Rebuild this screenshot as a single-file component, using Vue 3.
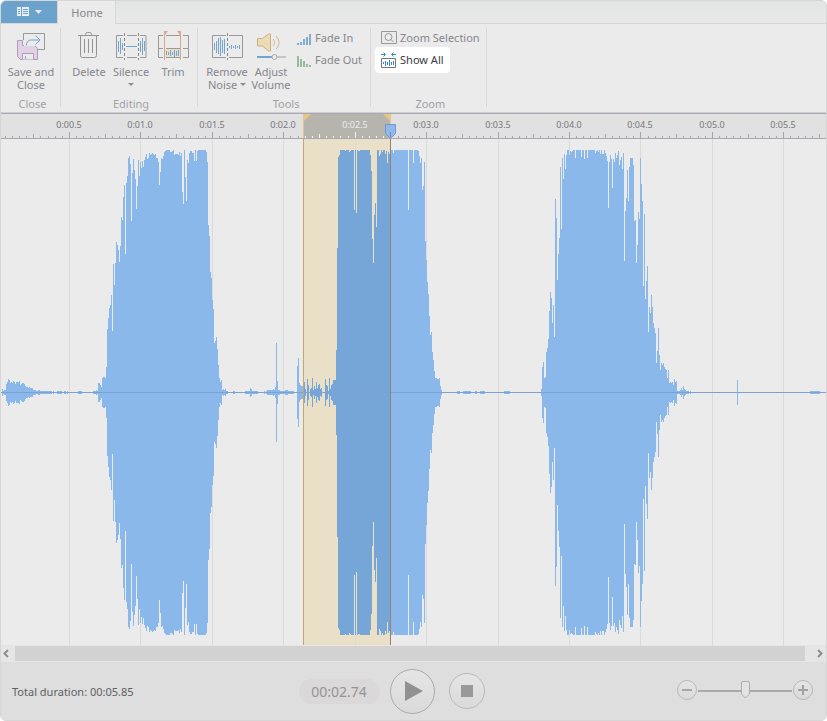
<script setup>
import { ref } from 'vue'

const SPAN = 825
const zoom = ref(50)

// Envelope steps: column position, amplitude (held until the next step)
const steps = `2:3 3:1 4:2 6:8 7:10 8:13 9:12 10:9 11:10 12:9 13:11 14:10 15:8 16:10 19:11 20:7 21:8 22:9 24:8 25:6 26:5 28:4 29:5 30:4 33:2 36:1 38:2 40:1 52:0 53:1 54:0 57:1 62:0 64:1 66:0 67:1 68:0 78:1 82:0
93:1 96:2 97:1 98:9 100:7 101:5 102:14 103:15 105:14 106:25 107:63 108:74 109:84 110:87 111:97 112:61 113:128 114:107 115:129 116:150 117:147 118:142 119:130 120:146 121:175 122:172 123:195 124:207 125:138 126:209 127:216 128:234 129:236 130:228 131:171 132:219 133:233 134:222 135:213 136:183 137:206 138:232 139:216 140:230 141:224 142:231 143:225 144:232 145:235 146:238 147:233 148:234 149:239 150:237 151:238 152:239 153:238 154:237 155:238 156:234 158:230 159:207 160:220 161:234 162:233 163:236 164:240 165:241 166:242 170:240 172:241 173:242 174:237 175:238 178:237 179:240 180:236 181:239 182:200 183:188 184:242 185:215 186:191 187:232 188:229 189:239 190:241 192:239 194:231 195:242 196:231 197:241 198:242 206:240 207:230 208:167 209:156 210:120 211:114 212:92 213:83 214:49 215:51 216:55 217:43 218:27 219:14 220:10 221:12 222:2 223:3 224:2 225:3 226:1 228:0
233:1 235:0 245:1 250:4 251:3 252:1 258:0 264:1 265:0 266:1 267:2 273:3 274:2 275:5 276:49 277:11 278:2 280:1 285:2 288:1 294:0 297:26 298:34 299:9 300:7 301:6 304:10 305:3 306:0 307:13 308:7 309:0 310:3 311:4 312:14 313:2 314:6 315:3 316:10 317:4 318:7 319:8 320:3 321:4 322:0 325:13 326:7 327:6 328:1 329:14 330:3 331:7 332:8 333:12 336:42 337:144 338:235 339:237 340:242 345:241 346:242 349:240 350:241 351:242 354:182 355:242 356:179 357:242 358:241 360:242 370:237 371:221 372:153 373:129 374:177 375:189 376:165 377:242 379:236 380:238 381:242 382:240 383:242 385:238 386:241 387:229 388:240 389:238 390:242 393:239 394:242 408:182 409:242 413:229 414:242 418:241 419:236 420:229 421:234 422:202 423:206 424:230 425:151 426:132 427:110 428:98 429:76 430:57 431:60 432:40 433:32 434:21 435:14 437:13 439:14 440:6 441:2 442:0
457:1 460:0 463:1 471:0 475:1 477:0 480:1 485:0 504:1 510:0
541:3 542:25 543:30 544:14 545:15 546:40 547:44 548:53 549:81 550:100 551:94 552:69 553:87 554:55 555:193 556:174 557:112 558:138 559:154 560:225 561:163 562:234 563:213 564:238 565:223 566:237 567:242 569:237 570:241 571:240 572:241 573:242 575:234 576:242 581:235 582:242 584:233 585:242 587:234 588:242 595:239 596:241 597:242 598:240 599:242 600:238 601:242 602:238 604:242 605:239 606:236 607:231 608:184 609:230 610:237 611:233 612:204 613:233 614:230 615:239 616:234 617:237 618:241 619:227 620:232 621:235 622:223 623:239 624:131 625:181 626:194 627:222 628:191 629:225 630:234 633:227 634:171 635:172 636:129 637:147 638:180 639:173 640:234 641:208 642:191 643:106 644:178 645:93 646:111 647:126 648:60 649:85 650:79 651:97 652:85 653:69 654:64 655:59 656:29 657:41 658:64 659:37 660:22 661:29 662:27 663:29 664:25 665:23 666:22 667:14 668:22 669:9 670:10 671:9 672:10 673:7 674:13 675:10 676:11 677:1 680:2 681:4 682:2 683:6 684:3 685:2 686:1 689:0 690:1 691:0
737:12 738:0 810:1 820:0 826:0`
  .split(/\s+/)
  .map((s) => s.split(':').map(Number))

let wavePath = ''
for (let i = 0; i < steps.length - 1; i++) {
  const [x, a] = steps[i]
  if (!a) continue
  const w = steps[i + 1][0] - x
  wavePath += `M${x - 1} ${253 - a}h${w}v${2 * a + 1}h${-w}z`
}

const at = (sec) => Math.floor(sec * 142.86 - 2 + 0.05) - 1
const pct = (x) => (x / SPAN) * 100 + '%'

const ticks = []
for (let n = 1; n <= 115; n++) {
  const x = at(n * 0.05)
  if (x < 0 || x >= SPAN) continue
  ticks.push({ x, h: n % 10 === 0 ? 6 : n % 5 === 0 ? 4 : 2, lit: x > 302 && x < 388 })
}
const marks = []
for (let n = 1; n <= 11; n++) {
  const x = at(n * 0.5)
  marks.push({ x, text: `0:0${(n / 2).toFixed(1)}`, lit: n === 5 })
}
</script>

<template>
  <div class="window">
    <nav class="tabs">
      <button class="file" aria-label="File menu">
        <svg width="32" height="12" viewBox="0 0 32 12">
          <path fill="#e8eef2" fill-rule="evenodd" d="M0 1h4v9H0zM1 3v1h2V3zM1 5v1h2V5zM1 7v1h2V7zM5 1h7v9H5zM6 3v1h5V3zM6 5v1h5V5zM6 7v1h5V7z" />
          <path fill="#e8eef2" d="M18 4h7l-3.500 4z" />
        </svg>
      </button>
      <button class="tab">Home</button>
    </nav>

    <section class="ribbon">
      <div class="group">
        <div class="tools closing">
          <button class="big wide">
            <svg width="32" height="30" viewBox="0 0 32 30" fill="none">
              <path stroke="#999" d="M8.500 9V2.500h21v16H23" />
              <path fill="#dfd3e3" stroke="#b398c1" d="M2.500 9.500h5v5h11v-1l4 4v11h-17l-3-3z" />
              <path fill="#ebebeb" stroke="#b398c1" d="M7.500 28.500v-6h11v6M10.500 28v-3" />
              <path fill="#ebebeb" d="M9 9h12v6H9z" />
              <path stroke="#72a5d2" d="M11.500 14.500c0-4 2-5.500 5-5.500h8M20.500 4.500L25 9l-4.500 4.500" />
            </svg>
            <span>Save and<br />Close</span>
          </button>
        </div>
        <div class="caption">Close</div>
      </div>

      <div class="group">
        <div class="tools editing">
          <button class="big">
            <svg width="32" height="30" viewBox="0 0 32 30" fill="none" stroke="#939393">
              <path d="M5 4.500h21M12.500 4V3.500a2 2 0 0 1 2-2h2a2 2 0 0 1 2 2V4M7.500 5v19.500a2 2 0 0 0 2 2h12a2 2 0 0 0 2-2V5M11.500 8v14M15.500 8v14M19.500 8v14" />
            </svg>
            <span>Delete</span>
          </button>
          <button class="big">
            <svg width="32" height="30" viewBox="0 0 32 30" fill="none">
              <path stroke="#999" d="M8 4.500H1.500v22H8M12 4.500h10M12 26.500h10M25 4.500h6v22H25" />
              <path stroke="#888" stroke-dasharray="3 2" d="M9.500 2v27M23.500 2v27" />
              <path stroke="#72a5d2" d="M3.500 10v11M5.500 7v16M7.500 12v7M11 15.500h11M25.500 10v11M27.500 7v17M29.500 10v10" />
            </svg>
            <span>Silence</span>
            <i class="arrow"></i>
          </button>
          <button class="big">
            <svg width="32" height="30" viewBox="0 0 32 30" fill="none">
              <path fill="#e9e0cc" d="M8 18h15v8H8z" />
              <path stroke="#999" d="M6 4.500H1.500v22H6M9 4.500h14M9 26.500h14M26 4.500h5.500v22H26M1 17.500h5M9 17.500h14M26 17.500h5" />
              <path stroke="#dda68a" d="M7.500 2v27M23.500 2v27" />
              <path fill="#dda68a" d="M7 0h4L8 4H7zM24 0h-4l3 4h1z" />
              <path stroke="#72a5d2" d="M9.500 20v4M11.500 21v3M13.500 19v6M15.500 21v3M17.500 19v7M19.500 20v5M21.500 19v6" />
            </svg>
            <span>Trim</span>
          </button>
        </div>
        <div class="caption">Editing</div>
      </div>

      <div class="group">
        <div class="tools sound">
          <button class="big">
            <svg width="32" height="30" viewBox="0 0 32 30" fill="none">
              <path stroke="#999" d="M15 4.500H1.500v22H15M18 4.500h13.500v22H18" />
              <path stroke="#888" stroke-dasharray="3 2" d="M16.500 2v27" />
              <path stroke="#72a5d2" d="M3.500 12v7M5.500 10v12M7.500 7v16M9.500 6v19M11.500 9v13M13.500 8v15M18.500 15v2M20.500 14v4M22.500 15v2M24.500 14v4M26.500 15v2M28.500 14v4" />
            </svg>
            <span>Remove<br />Noise <i class="arrow inline"></i></span>
          </button>
          <button class="big">
            <svg width="32" height="30" viewBox="0 0 32 30" fill="none">
              <path fill="#ecdcb4" stroke="#cfae81" d="M2.500 7.500h5l6-4.500h2v17h-2l-6-5h-5z" />
              <path stroke="#d5b48c" d="M18 8c2 2 2 5 0 7M21 5c4 4 4 9 0 13" />
              <path stroke="#72a5d2" stroke-width="2" d="M2 26h15" />
              <path stroke="#c5c5c5" stroke-width="2" d="M22 26h9" />
              <circle cx="19.500" cy="26" r="2.500" stroke="#aaa" fill="#ebebeb" />
            </svg>
            <span>Adjust<br />Volume</span>
          </button>
          <div class="stack">
            <button class="small">
              <svg width="14" height="16" viewBox="0 0 14 16" fill="#82abd2">
                <path d="M0 13h2v2H0zM3 12h2v3H3zM6 9h2v6H6zM9 7h2v8H9zM12 4h2v11h-2z" />
              </svg>
              Fade In
            </button>
            <button class="small">
              <svg width="14" height="16" viewBox="0 0 14 16" fill="#94bb9b">
                <path d="M0 4h2v11H0zM3 7h2v8H3zM6 9h2v6H6zM9 12h2v3H9zM12 13h2v2h-2z" />
              </svg>
              Fade Out
            </button>
          </div>
        </div>
        <div class="caption">Tools</div>
      </div>

      <div class="group">
        <div class="tools view">
          <div class="stack">
            <button class="small">
              <svg width="16" height="16" viewBox="0 0 16 16" fill="none" stroke="#999">
                <path d="M.5 1.500h15v12H.5z" />
                <circle cx="7.500" cy="7" r="3.500" />
                <path d="M10 9.500l2.500 2.500" />
              </svg>
              Zoom Selection
            </button>
            <button class="small active">
              <svg width="16" height="16" viewBox="0 0 16 16" fill="none">
                <path stroke="#777" d="M.5 6.500h14v9H.5z" />
                <path stroke="#2f86cf" d="M0 2.500h4M2.500 .5l2 2-2 2M15 2.500h-4M12.500 .5l-2 2 2 2M2.500 10v2M4.500 9v5M6.500 10v3M8.500 8v6M10.500 10v3M12.500 9v4" />
              </svg>
              Show All
            </button>
          </div>
        </div>
        <div class="caption">Zoom</div>
      </div>
    </section>

    <section class="timeline">
      <div class="ruler">
        <svg class="fill" viewBox="0 0 825 25" preserveAspectRatio="none">
          <rect x="302" y="0" width="88" height="24" fill="#b7b4ae" />
          <path fill="#e6c588" d="M302 0h8l-7 7v17h-1zM390 0h-8l7 7v17h1z" />
          <rect x="0" y="24" width="825" height="1" fill="#a7a9b0" />
          <rect v-for="t in ticks" :key="t.x" :x="t.x" :y="24 - t.h" width="1" :height="t.h" :fill="t.lit ? '#f2f2f2' : '#a4a7ae'" />
        </svg>
        <span v-for="m in marks" :key="m.x" class="mark" :class="{ lit: m.lit }" :style="{ left: pct(m.x) }">{{ m.text }}</span>
        <svg class="cursor" :style="{ left: pct(390) }" width="12" height="15" viewBox="0 0 12 15">
          <path fill="#8fb9ea" stroke="#7594cc" d="M.5 .5h10v9l-4 4h-2l-4-4z" />
          <path stroke="#6c8bc4" d="M5.500 8v5" />
        </svg>
      </div>
      <div class="wave">
        <svg class="fill" viewBox="0 0 825 506" preserveAspectRatio="none" shape-rendering="crispEdges">
          <defs>
            <clipPath id="picked"><rect x="302" y="0" width="88" height="506" /></clipPath>
          </defs>
          <rect x="302" y="0" width="88" height="506" fill="#eae0c8" />
          <rect v-for="m in marks" :key="m.x" :x="m.x" y="0" width="1" height="506" :fill="m.lit ? '#e0d9c9' : '#dadada'" />
          <path :d="wavePath" fill="#8bb8ea" />
          <path :d="wavePath" fill="#76a5d7" clip-path="url(#picked)" />
          <rect x="0" y="253" width="825" height="1" fill="#7ba2d0" />
          <rect x="302" y="0" width="1" height="506" fill="#c6a669" />
          <rect x="389" y="0" width="1" height="506" fill="#96816a" />
        </svg>
      </div>
      <div class="scroll">
        <button aria-label="Scroll left">
          <svg width="8" height="9" viewBox="0 0 8 9" fill="none" stroke="#8d8d8d" stroke-width="2"><path d="M6 1L2.500 4.500 6 8" /></svg>
        </button>
        <div class="thumb"></div>
        <button class="next" aria-label="Scroll right">
          <svg width="8" height="9" viewBox="0 0 8 9" fill="none" stroke="#8d8d8d" stroke-width="2"><path d="M2 1l3.500 3.500L2 8" /></svg>
        </button>
      </div>
    </section>

    <footer>
      <div class="total">Total duration: 00:05.85</div>
      <div class="transport">
        <output class="time">00:02.74</output>
        <button class="round play" aria-label="Play">
          <svg width="20" height="22" viewBox="0 0 20 22" fill="#919191"><path d="M1 1l18 10L1 21z" /></svg>
        </button>
        <button class="round stop" aria-label="Stop">
          <svg width="12" height="12" viewBox="0 0 12 12" fill="#999"><path d="M0 0h12v12H0z" /></svg>
        </button>
      </div>
      <div class="zoomer">
        <button class="round step" aria-label="Zoom out">
          <svg width="10" height="10" viewBox="0 0 10 10" fill="#a6a6a6"><path d="M0 4h10v2H0z" /></svg>
        </button>
        <div class="slider">
          <div class="knob" :style="{ left: zoom + '%' }">
            <svg width="9" height="18" viewBox="0 0 9 18"><path fill="#e3e3e4" stroke="#acacac" d="M.5 2a1.500 1.500 0 0 1 1.500-1.500h5A1.500 1.500 0 0 1 8.500 2v11l-4 4-4-4z" /></svg>
          </div>
          <input v-model="zoom" type="range" min="0" max="100" aria-label="Zoom level" />
        </div>
        <button class="round step" aria-label="Zoom in">
          <svg width="10" height="10" viewBox="0 0 10 10" fill="#a2a2a2"><path d="M0 4h4V0h2v4h4v2H6v4H4V6H0z" /></svg>
        </button>
      </div>
    </footer>
  </div>
</template>

<style>
body {
  margin: 0;
  background: #fff;
}
</style>

<style scoped>
* {
  box-sizing: border-box;
}
.window {
  display: flex;
  flex-direction: column;
  min-height: 100vh;
  border: 1px solid #d6d6d6;
  border-radius: 6px;
  overflow: hidden;
  background: #ebebeb;
  color: #86868b;
  font-family: 'Noto Sans', 'Open Sans', sans-serif;
  font-size: 11px;
}
button {
  margin: 0;
  padding: 0;
  border: 0;
  background: none;
  color: inherit;
  font: inherit;
}
svg {
  display: block;
}
.tabs {
  display: flex;
  height: 23px;
  background: linear-gradient(#e3e4e4, #e9e9e9);
  border-bottom: 1px solid #d6d6d6;
}
.file {
  width: 56px;
  height: 22px;
  padding-left: 16px;
  background: #6ca3cc;
}
.tab {
  width: 59px;
  height: 23px;
  padding-left: 1px;
  border: solid #d6d6d6;
  border-width: 0 1px;
  background: #ebebeb;
}
.ribbon {
  display: flex;
  height: 90px;
  border-bottom: 1px solid #a9a9b5;
  box-shadow: inset 0 -1px #cfcfd2;
}
.group {
  position: relative;
  display: flex;
  flex-direction: column;
  padding-right: 1px;
}
.group::after {
  content: '';
  position: absolute;
  right: 0;
  top: 4px;
  bottom: 6px;
  width: 1px;
  background: #d9d9db;
}
.tools {
  display: flex;
  height: 73px;
}
.caption {
  padding-left: 4px;
  line-height: 14px;
  text-align: center;
  color: #a1a1a6;
}
.closing {
  padding-left: 1px;
}
.editing {
  padding: 0 3px 0 7px;
}
.sound {
  padding: 0 8px 0 7px;
}
.view {
  padding: 0 2px 0 0;
}
.big {
  display: flex;
  flex-direction: column;
  align-items: center;
  width: 42px;
  padding-top: 7px;
  line-height: 13px;
  white-space: nowrap;
}
.big svg {
  margin-bottom: 4px;
}
.sound .big {
  width: 44px;
}
.big.wide {
  width: 58px;
}
.arrow {
  width: 0;
  height: 0;
  margin-top: 5px;
  border: solid transparent;
  border-width: 3px 3px 0;
  border-top-color: #8b8b90;
}
.arrow.inline {
  display: inline-block;
  margin: 0;
  vertical-align: 3px;
}
.stack {
  display: flex;
  flex-direction: column;
  align-items: flex-start;
  padding-top: 3px;
}
.small {
  display: flex;
  align-items: flex-start;
  gap: 4px;
  height: 22px;
  margin-left: 4px;
  line-height: 22px;
  white-space: nowrap;
}
.small svg {
  margin-top: 3px;
}
.view .small {
  gap: 3px;
  margin-left: 6px;
  padding: 0 4px;
}
.small.active {
  border-radius: 2px;
  background: #fff;
  box-shadow: 0 0 0 2px #fff;
  color: #3a3a3f;
}
.timeline {
  display: flex;
  flex: 1;
  flex-direction: column;
}
.fill {
  width: 100%;
  height: 100%;
}
.ruler {
  position: relative;
  height: 25px;
  background: #e1e1e1;
}
.mark {
  position: absolute;
  top: 5px;
  font-size: 9px;
  line-height: 12px;
  color: #77777b;
  transform: translateX(-50%);
}
.mark.lit {
  color: #eee;
}
.cursor {
  position: absolute;
  bottom: 0;
  margin-left: -6px;
}
.wave {
  position: relative;
  flex: 1;
  min-height: 300px;
}
.wave .fill {
  position: absolute;
  inset: 0;
}
.scroll {
  display: flex;
  height: 17px;
  border: solid #e5e5e5;
  border-width: 1px 0;
  background: #e5e5e5;
}
.scroll button {
  width: 14px;
  padding-left: 1px;
}
.scroll .next {
  width: 21px;
  padding-left: 11px;
}
.thumb {
  flex: 1;
  background: #d2d2d2;
}
footer {
  display: grid;
  grid-template-columns: 1fr auto 1fr;
  align-items: center;
  height: 58px;
  padding: 0 13px 0 11px;
  background: #dedede;
}
.total {
  color: #606064;
}
.transport {
  display: flex;
  align-items: center;
  margin-right: 42px;
}
.time {
  width: 81px;
  margin-right: 10px;
  border-radius: 13px;
  background: #dad8d9;
  color: #949494;
  font-size: 14px;
  line-height: 25px;
  text-align: center;
}
.round {
  display: flex;
  align-items: center;
  justify-content: center;
  border: 1px solid #b9b9b9;
  border-radius: 50%;
  background: linear-gradient(#e5e5e6, #dadada);
}
.play {
  width: 45px;
  height: 45px;
  padding-left: 4px;
  border-color: #aaa;
}
.stop {
  width: 36px;
  height: 36px;
  margin-left: 14px;
}
.zoomer {
  display: flex;
  align-items: center;
  justify-content: flex-end;
  margin-bottom: 3px;
}
.step {
  width: 20px;
  height: 20px;
}
.slider {
  position: relative;
  width: 94px;
  height: 2px;
  margin: 2px 1px 0;
  background: #a9a9a9;
}
.slider input {
  position: absolute;
  inset: -8px 0;
  width: 100%;
  height: 18px;
  margin: 0;
  opacity: 0;
}
.knob {
  position: absolute;
  top: -9px;
  margin-left: -4px;
}
</style>
